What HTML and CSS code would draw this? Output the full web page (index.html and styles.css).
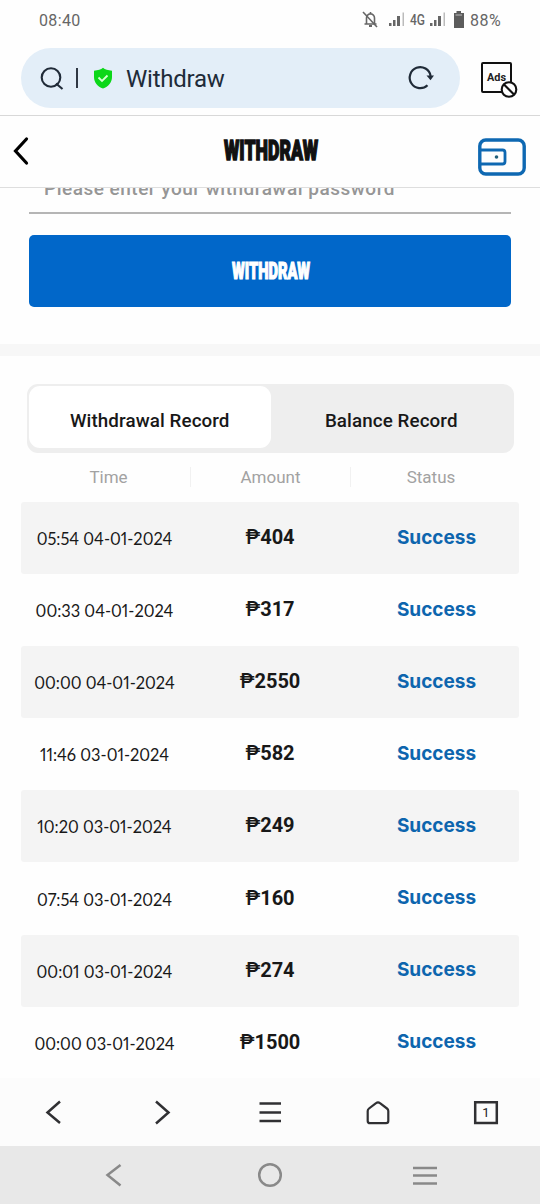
FILE: index.html
```html
<!DOCTYPE html>
<html lang="en">
<head>
<meta charset="utf-8">
<title>Withdraw</title>
<link rel="stylesheet" href="styles.css">
</head>
<body>
<header class="status">
  <span class="clock">08:40</span>
  <svg class="status-icons" width="94" height="22" viewBox="0 0 94 22">
    <g fill="none" stroke="#666" stroke-width="1.6">
      <path d="M5.500 14.500V9Q5.500 5.300 9.500 4.700Q13.500 5.300 13.500 9V14.500M3.500 15H15.500M9.500 3V5"/>
      <path d="M2 3L16 18"/><path d="M8 17H11" stroke-width="2"/>
    </g>
    <g fill="#666"><path d="M28 14h2.500v3H28zM32 11h2.500v6H32zM36 7h3v10h-3z"/><path d="M69 14h2.500v3H69zM73 11h2.500v6H73zM77 7h3v10h-3z"/></g>
    <path d="M41.500 3.500h1.500v13.500h-1.500zM82.500 3.500H84v13.500h-1.500z" fill="#bbb"/>
    <text x="49" y="15.500" class="network" textLength="15" lengthAdjust="spacingAndGlyphs">4G</text>
  </svg>
  <svg class="battery" width="12" height="20" viewBox="0 0 12 20"><path d="M3.500 1h4.500v2H11v15H1V3h2.500z" fill="#5c5c5c"/><path d="M2.500 5H9" stroke="#bbb"/></svg>
  <span class="percent">88%</span>
</header>

<div class="browser">
  <div class="address">
    <svg class="search" width="26" height="26" viewBox="0 0 26 26" fill="none" stroke="#202b38" stroke-width="2.100"><circle cx="12" cy="12.500" r="9.300"/><path d="M17 18.500L23.500 24"/></svg>
    <span class="caret"></span>
    <svg class="shield" width="20" height="22" viewBox="0 0 20 22"><path d="M10 .8C12 2.500 15 3.500 19 3.700V10C19 15.500 15.500 19.500 10 21.500C4.500 19.500 1 15.500 1 10V3.700C5 3.500 8 2.500 10 .8Z" fill="#0cd719"/><path d="M5.500 10.500L9 14L14.500 8.500" fill="none" stroke="#d5ffd2" stroke-width="1.800"/></svg>
    <span class="address-text">Withdraw</span>
    <svg class="reload" width="26" height="26" viewBox="0 0 26 26"><path d="M19.500 20.200A10.500 10.500 0 1 1 22.600 11" fill="none" stroke="#202b38" stroke-width="2.200"/><path d="M18.500 10.500H26L22.500 15.300Z" fill="#202b38"/></svg>
  </div>
  <svg class="ads" width="38" height="38" viewBox="0 0 38 38"><rect x="2" y="2" width="29" height="29" rx="1" fill="none" stroke="#111" stroke-width="2"/><text x="7" y="20" class="ads-text" textLength="19" lengthAdjust="spacingAndGlyphs">Ads</text><circle cx="29" cy="28.500" r="7.300" fill="#fff" stroke="#111" stroke-width="2.100"/><path d="M24 23.500L34 33.500" stroke="#111" stroke-width="2.100"/></svg>
</div>

<div class="titlebar">
  <svg class="back" width="18" height="30" viewBox="0 0 18 30"><path d="M14.500 3L3.500 15L14.500 27" fill="none" stroke="#000" stroke-width="3.200" stroke-linecap="round"/></svg>
  <svg width="120" height="40" viewBox="0 0 120 40"><text x="15" y="28" class="title" textLength="94" lengthAdjust="spacingAndGlyphs">WITHDRAW</text></svg>
  <svg class="wallet" width="48" height="38" viewBox="0 0 48 38" fill="none" stroke="#0e68b2"><rect x="1.800" y="2" width="44.400" height="34" rx="6" stroke-width="3.400"/><path d="M2 12H24.500Q27 12 27 14.500V23.500Q27 26 24.500 26H2" stroke-width="2.800"/><circle cx="18.500" cy="19" r="1.800" fill="#22607b" stroke="none"/></svg>
</div>

<main>
  <div class="field"><span>Please enter your withdrawal password</span></div>
  <div class="button"><svg width="100" height="36" viewBox="0 0 100 36"><text x="12" y="26" class="button-text" textLength="78" lengthAdjust="spacingAndGlyphs">WITHDRAW</text></svg></div>
  <div class="divider"></div>
  <div class="tabs"><div class="tab active"><span>Withdrawal Record</span></div><div class="tab"><span>Balance Record</span></div></div>
  <div class="heads"><span class="time-head">Time</span><span>Amount</span><span>Status</span></div>
  <div class="records">
    <div class="row"><span class="time">05:54 04-01-2024</span><span class="amount"><i>₱</i>404</span><span class="success">Success</span></div>
    <div class="row"><span class="time">00:33 04-01-2024</span><span class="amount"><i>₱</i>317</span><span class="success">Success</span></div>
    <div class="row"><span class="time">00:00 04-01-2024</span><span class="amount"><i>₱</i>2550</span><span class="success">Success</span></div>
    <div class="row"><span class="time">11:46 03-01-2024</span><span class="amount"><i>₱</i>582</span><span class="success">Success</span></div>
    <div class="row"><span class="time">10:20 03-01-2024</span><span class="amount"><i>₱</i>249</span><span class="success">Success</span></div>
    <div class="row"><span class="time">07:54 03-01-2024</span><span class="amount"><i>₱</i>160</span><span class="success">Success</span></div>
    <div class="row"><span class="time">00:01 03-01-2024</span><span class="amount"><i>₱</i>274</span><span class="success">Success</span></div>
    <div class="row"><span class="time">00:00 03-01-2024</span><span class="amount"><i>₱</i>1500</span><span class="success">Success</span></div>
  </div>
</main>

<nav class="toolbar">
  <svg viewBox="0 0 28 28"><path d="M20 3.500L7.500 14.500L20 25" /></svg>
  <svg viewBox="0 0 28 28"><path d="M8 3.500L20.500 14.500L8 25.500"/></svg>
  <svg viewBox="0 0 28 28"><path d="M3.500 5.500H25M3.500 14.500H25M3.500 23H25"/></svg>
  <svg viewBox="0 0 28 28"><path d="M14 4.300Q15 4.300 16 5.200L23 10.500Q24.300 11.500 24.300 13V23Q24.300 25.200 22 25.200H6Q3.700 25.200 3.700 23V13Q3.700 11.500 5 10.500L12 5.200Q13 4.300 14 4.300Z" stroke-width="2.200"/></svg>
  <svg viewBox="0 0 28 28"><path d="M3.200 4.200H24.800V25H3.200Z"/><text x="14" y="19" class="tab-count">1</text></svg>
</nav>
<nav class="system">
  <svg viewBox="0 0 28 28"><path d="M20.500 4L7.500 14L20.500 24.500"/></svg>
  <svg viewBox="0 0 28 28"><circle cx="14" cy="14" r="10.800"/></svg>
  <svg viewBox="0 0 28 28"><path d="M2 7H26M2 14.500H26M2 22.500H26"/></svg>
</nav>
</body>
</html>
```
FILE: styles.css
```css
* { box-sizing: border-box; }
body { margin: 0; width: 540px; height: 1204px; overflow: hidden; background: #fefefe; font-family: Roboto, sans-serif; color: #181818; }
svg { display: block; flex: none; overflow: visible; }
.status { height: 40px; display: flex; align-items: center; padding: 0 0 0 39px; color: #666; font-size: 16px; }
.clock { width: 322px; letter-spacing: .35px; }
.network { font: 500 14px Roboto, sans-serif; fill: #666; }
.battery { margin-left: -2px; }
.percent { margin-left: 5px; letter-spacing: .5px; }
.browser { height: 76px; display: flex; padding: 8px 0 0 21px; border-bottom: 1px solid #d8d8d8; }
.address { width: 439px; height: 60px; border-radius: 30px; background: #e3eef8; display: flex; align-items: center; padding: 0 26px 0 18px; }
.caret { width: 2px; height: 20px; background: #303844; margin: 0 15px 0 11px; }
.address-text { font-size: 24px; color: #202b38; margin: 2px 0 0 13px; letter-spacing: -.25px; }
.reload { margin-left: auto; }
.ads { margin: 13px 0 0 20px; }
.ads-text { font: 700 11px Roboto, sans-serif; fill: #222; }
.titlebar { height: 72px; border-bottom: 1px solid #dedede; display: flex; align-items: center; justify-content: space-between; padding: 0 14px 0 12px; background: #fefefe; }
.titlebar .back { margin-top: -2px; }
.titlebar .wallet { margin: 10px 0 0 -30px; }
.title { font: 900 27px Roboto, sans-serif; fill: #111; stroke: #111; stroke-width: 1.500px; }
.button-text { font: 900 23px Roboto, sans-serif; fill: #fff; stroke: #fff; stroke-width: 1.200px; }
.field { height: 26px; overflow: hidden; margin: 0 29px; border-bottom: 2px solid #b5b5b5; display: flex; align-items: flex-start; padding-left: 15px; color: #969696; font-size: 19px; font-weight: 500; }
.field span { margin-top: -11px; line-height: 24px; white-space: nowrap; letter-spacing: .5px; }
.button { height: 72px; margin: 21px 29px 0; border-radius: 5px; background: #0167c9; display: flex; align-items: center; justify-content: center; }
.divider { height: 12px; margin-top: 37px; background: #f7f7f7; }
.tabs { height: 69px; margin: 28px 26px 0 27px; border-radius: 11px; background: #eee; display: flex; padding: 2px; }
.tab { flex: 1; height: 62px; display: flex; align-items: center; justify-content: center; padding-top: 7px; font: 500 18.800px Roboto, sans-serif; letter-spacing: .1px; border-radius: 11px; }
.active { background: #fff; }
.heads { height: 49px; padding: 0 29px 0 27px; display: grid; grid-template-columns: 163px 160px 161px; align-items: center; text-align: center; color: #a2a2a2; font-size: 17px; }
.heads span { margin-top: -2px; }
.heads span + span { border-left: 1px solid #f1f1f1; }
.records { height: 576px; }
.row { height: 72.100px; margin: 0 21px; display: grid; grid-template-columns: 167px 164px 167px; align-items: center; text-align: center; border-radius: 3px; }
.row:nth-child(odd) { background: #f4f4f4; }
.time { font: 16.400px Lato, sans-serif; padding-top: 1px; font-feature-settings: "pnum" 1; }
.amount { font: 700 20px Roboto, sans-serif; margin-top: -2px; }
.amount i { font-style: normal; font-weight: 500; }
.success { font: 700 19px Inter, sans-serif; color: #0d65ae; margin-top: -2px; padding-left: 2px; }
.toolbar { height: 68px; background: #fcfcfc; display: grid; grid-template-columns: repeat(5, 108px); align-items: center; justify-items: center; }
.toolbar svg, .system svg { width: 28px; height: 28px; fill: none; stroke: #303033; stroke-width: 2.500px; }
.toolbar .tab-count { font: 13px Roboto, sans-serif; text-anchor: middle; fill: #222; stroke: none; }
.system { height: 58px; background: #e8e8e8; display: flex; justify-content: space-between; align-items: center; padding: 0 101px 0 100px; }
.system svg { stroke: #898989; }
```
